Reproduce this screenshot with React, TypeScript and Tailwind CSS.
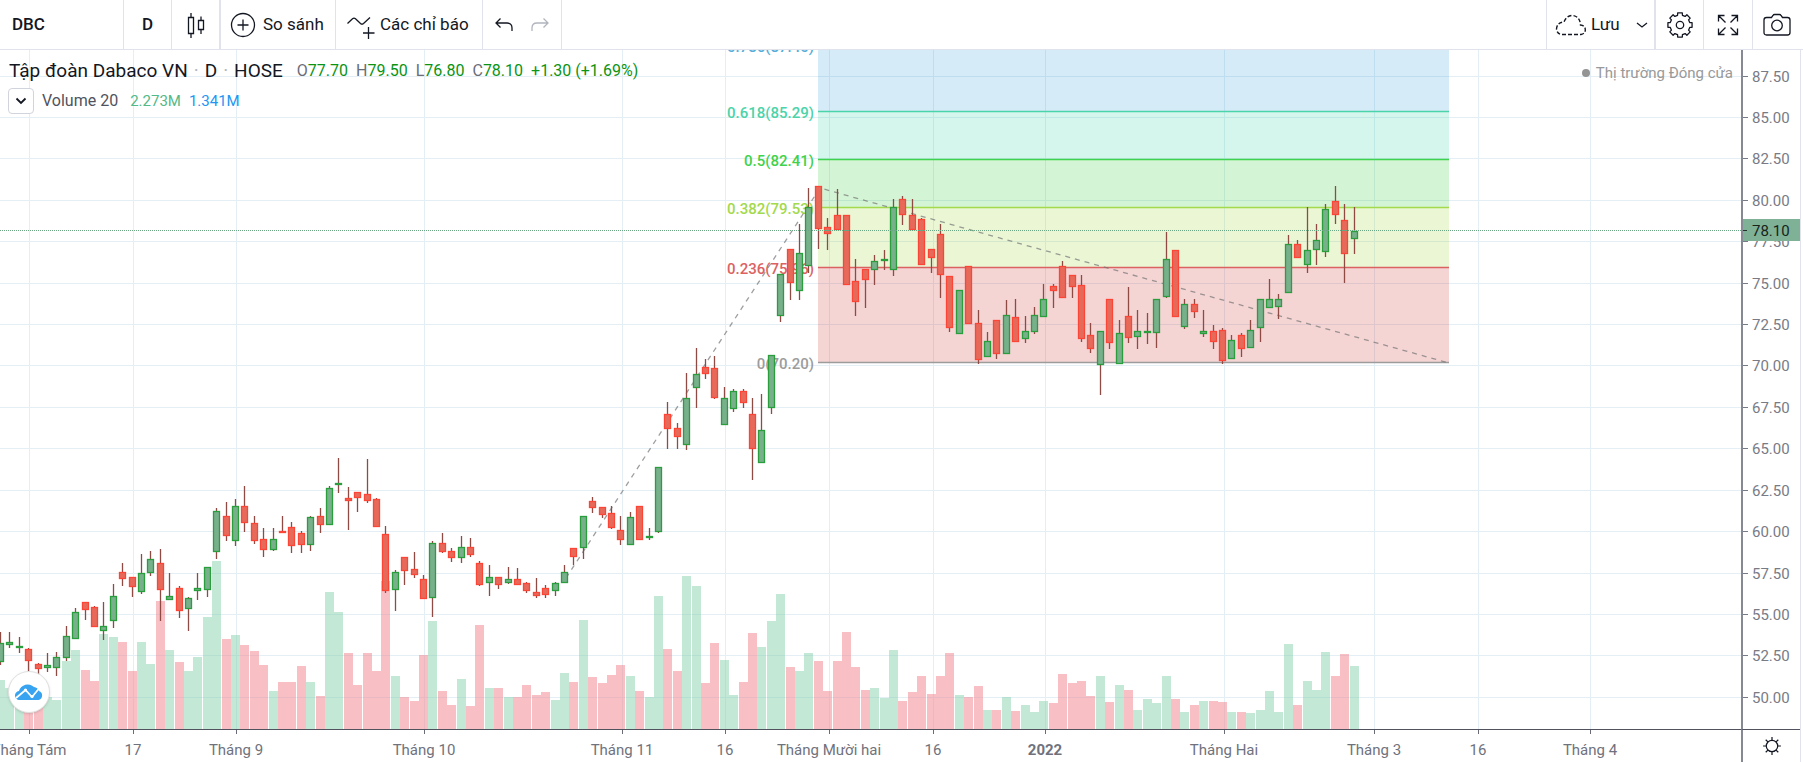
import { useState } from "react"

/* [direction, high, body top, body bottom, low, volume top], y positions on the chart canvas */
type Bar = ["u" | "d", number, number, number, number, number]

const bars: Bar[] = [
  ["u", 632, 643, 662, 665, 680], ["u", 632, 642, 645, 648, 688], ["u", 637, 646, 648, 653, 693],
  ["d", 648, 649, 661, 672, 700], ["d", 663, 664, 669, 675, 700], ["u", 653, 665, 668, 672, 697],
  ["u", 652, 657, 668, 676, 700], ["u", 626, 636, 658, 661, 661], ["u", 608, 612, 639, 639, 650],
  ["d", 602, 602, 610, 620, 670], ["d", 606, 607, 627, 627, 681], ["u", 602, 626, 631, 640, 634],
  ["u", 584, 596, 621, 628, 637], ["d", 563, 572, 579, 586, 642], ["d", 577, 577, 587, 597, 671],
  ["u", 554, 573, 592, 594, 642], ["u", 551, 559, 573, 576, 664], ["d", 549, 563, 590, 621, 601],
  ["u", 573, 596, 600, 600, 650], ["d", 586, 588, 611, 618, 662], ["u", 597, 598, 609, 631, 671],
  ["u", 573, 588, 591, 600, 657], ["u", 567, 567, 590, 597, 617], ["u", 508, 511, 552, 559, 561],
  ["d", 502, 516, 536, 541, 639], ["u", 499, 506, 541, 546, 635], ["d", 486, 506, 523, 532, 645],
  ["d", 516, 523, 541, 544, 651], ["d", 528, 539, 550, 557, 665], ["u", 528, 539, 550, 551, 691],
  ["d", 516, 531, 533, 533, 682], ["d", 522, 527, 546, 553, 682], ["d", 531, 533, 545, 553, 666],
  ["u", 516, 517, 545, 551, 682], ["d", 508, 516, 525, 533, 696], ["u", 486, 488, 525, 525, 592],
  ["u", 458, 483, 485, 493, 612], ["d", 487, 498, 501, 530, 653], ["d", 492, 492, 498, 512, 685],
  ["d", 459, 494, 501, 503, 653], ["d", 498, 499, 527, 527, 671], ["d", 526, 534, 591, 593, 581],
  ["u", 570, 572, 590, 611, 676], ["d", 557, 557, 571, 585, 697], ["d", 552, 569, 575, 578, 701],
  ["d", 575, 579, 599, 599, 655], ["u", 541, 543, 598, 617, 621], ["d", 533, 543, 552, 553, 691],
  ["d", 548, 551, 558, 562, 705], ["u", 536, 547, 558, 563, 679], ["d", 538, 547, 555, 557, 706],
  ["d", 561, 563, 585, 586, 625], ["u", 565, 577, 583, 596, 688], ["d", 577, 577, 585, 589, 688],
  ["u", 567, 579, 583, 584, 697], ["d", 568, 579, 585, 585, 697], ["d", 582, 583, 591, 593, 685],
  ["d", 578, 592, 596, 598, 695], ["d", 585, 588, 595, 598, 692], ["u", 582, 583, 591, 596, 700],
  ["u", 565, 572, 583, 583, 673], ["d", 548, 548, 557, 565, 682], ["u", 516, 516, 548, 559, 620],
  ["d", 497, 501, 508, 513, 677], ["d", 507, 507, 515, 518, 683], ["d", 506, 513, 528, 529, 675],
  ["d", 516, 530, 540, 545, 665], ["u", 512, 517, 545, 545, 676], ["d", 506, 506, 540, 540, 691],
  ["u", 528, 536, 538, 540, 697], ["u", 467, 467, 532, 533, 596], ["d", 402, 414, 429, 449, 649],
  ["d", 423, 428, 437, 449, 671], ["u", 373, 398, 445, 450, 576], ["u", 348, 374, 388, 408, 586],
  ["d", 359, 367, 374, 379, 683], ["d", 356, 368, 398, 399, 643], ["u", 387, 398, 425, 425, 660],
  ["u", 389, 391, 409, 412, 695], ["d", 389, 391, 403, 408, 682], ["d", 398, 414, 449, 480, 633],
  ["u", 394, 430, 463, 463, 647], ["u", 355, 355, 408, 414, 621], ["u", 274, 274, 316, 322, 594],
  ["d", 249, 249, 283, 300, 667], ["u", 224, 253, 291, 300, 671], ["u", 188, 207, 266, 273, 653],
  ["d", 186, 186, 229, 249, 661], ["d", 218, 227, 234, 250, 691], ["d", 189, 215, 230, 230, 661],
  ["d", 215, 215, 285, 285, 632], ["d", 259, 281, 302, 316, 667], ["d", 269, 269, 280, 308, 690],
  ["u", 255, 261, 270, 285, 688], ["u", 250, 259, 261, 270, 698], ["u", 199, 207, 270, 276, 650],
  ["d", 196, 199, 215, 225, 701], ["d", 199, 215, 230, 230, 692], ["d", 218, 219, 265, 265, 676],
  ["d", 249, 249, 258, 273, 694], ["d", 224, 234, 275, 298, 676], ["d", 276, 276, 328, 332, 653],
  ["u", 290, 290, 334, 334, 695], ["d", 266, 266, 324, 324, 697], ["d", 310, 323, 360, 364, 686],
  ["u", 332, 341, 357, 357, 710], ["d", 320, 320, 354, 359, 710], ["u", 300, 315, 354, 354, 697],
  ["d", 299, 317, 342, 342, 711], ["u", 316, 331, 339, 343, 705], ["u", 307, 315, 332, 334, 712],
  ["u", 284, 299, 317, 317, 701], ["d", 284, 286, 291, 308, 703], ["d", 261, 266, 298, 298, 674],
  ["d", 275, 275, 287, 298, 683], ["d", 275, 285, 339, 342, 681], ["d", 323, 335, 349, 353, 696],
  ["u", 331, 331, 365, 395, 676], ["d", 299, 299, 343, 349, 702], ["u", 320, 333, 364, 364, 685],
  ["d", 287, 316, 338, 343, 690], ["u", 310, 331, 337, 349, 710], ["u", 313, 331, 333, 344, 699],
  ["u", 299, 299, 333, 348, 703], ["u", 232, 259, 297, 298, 676], ["d", 250, 250, 317, 317, 699],
  ["u", 299, 304, 327, 329, 712], ["d", 299, 304, 312, 318, 705], ["u", 310, 331, 334, 337, 701],
  ["d", 325, 331, 342, 349, 701], ["d", 328, 330, 361, 364, 702], ["u", 335, 340, 359, 359, 712],
  ["d", 333, 335, 349, 357, 712], ["u", 320, 330, 348, 348, 713], ["u", 299, 299, 328, 342, 710],
  ["u", 279, 299, 308, 308, 691], ["u", 294, 299, 307, 319, 712], ["u", 235, 244, 293, 293, 644],
  ["d", 240, 244, 258, 258, 705], ["u", 207, 250, 265, 273, 681], ["u", 224, 240, 250, 265, 690],
  ["u", 204, 209, 252, 257, 652], ["d", 186, 201, 215, 224, 676], ["d", 204, 220, 254, 283, 654],
  ["u", 207, 231, 239, 254, 666],
]

const prices = Array.from({ length: 16 }, (_, i) => 87.5 - i * 2.5)

const dates = [
  { x: 29, label: "Tháng Tám" },
  { x: 133, label: "17" },
  { x: 236, label: "Tháng 9" },
  { x: 424, label: "Tháng 10" },
  { x: 622, label: "Tháng 11" },
  { x: 725, label: "16" },
  { x: 829, label: "Tháng Mười hai" },
  { x: 933, label: "16" },
  { x: 1045, label: "2022", bold: true },
  { x: 1224, label: "Tháng Hai" },
  { x: 1374, label: "Tháng 3" },
  { x: 1478, label: "16" },
  { x: 1590, label: "Tháng 4" },
]

const fibs = [
  { y: 45, label: "0.786(87.40)", color: "#55add9", fill: "#2f9bd6" },
  { y: 111, label: "0.618(85.29)", color: "#4bd3a9", fill: "#2ad0a0" },
  { y: 159, label: "0.5(82.41)", color: "#3fd24c", fill: "#2ace2f" },
  { y: 207, label: "0.382(79.53)", color: "#a3d94c", fill: "#98d02a" },
  { y: 267, label: "0.236(75.96)", color: "#dc6262", fill: "#cc2a2a" },
  { y: 362, label: "0(70.20)", color: "#9c9c9c", fill: "none" },
]

const TOP = 50
const BASE = 730
const priceY = (price: number) => Math.round(75.5 + (87.5 - price) * 16.57)
const barX = (i: number) => Math.round(9.4 * i + 1)

const gearPath = (r: number, inner: number) => {
  const points: string[] = []
  for (let i = 0; i < 8; i++) {
    for (const [offset, radius] of [[-14, inner], [-11, r], [11, r], [14, inner]]) {
      const a = ((i * 45 + offset) * Math.PI) / 180
      points.push(`${(14 + radius * Math.sin(a)).toFixed(2)} ${(14 - radius * Math.cos(a)).toFixed(2)}`)
    }
  }
  return `M${points.join("L")}Z`
}

const Icon = ({ children, className = "size-7" }: { children: React.ReactNode; className?: string }) => (
  <svg className={className} viewBox="0 0 28 28" fill="none" stroke="currentColor" strokeWidth="1.3" aria-hidden="true">
    {children}
  </svg>
)

function Toolbar() {
  return (
    <header className="flex h-[50px] shrink-0 border-b border-[#e0e3eb] pr-0.5 text-[17px] text-[#131722]">
      <button className="w-[124px] border-r border-[#e0e3eb] pl-3 text-left font-medium">DBC</button>
      <button className="w-12 border-r border-[#e0e3eb] font-medium">D</button>
      <button className="flex w-[49px] items-center justify-center border-r-2 border-[#e0e3eb]" aria-label="Nến">
        <Icon>
          <path d="M6.5 6.5h5v16h-5zM9 2v4.500M9 22.500V27M16.500 9.500h5v9h-5zM19 5.500v4M19 18.500v4.500" />
        </Icon>
      </button>
      <button className="flex w-[115px] items-center gap-1.5 border-r border-[#e0e3eb] pl-2">
        <Icon>
          <circle cx="14" cy="14" r="11.500" />
          <path d="M14 8.500v11M8.500 14h11" />
        </Icon>
        <span>So sánh</span>
      </button>
      <button className="flex w-[147px] items-center gap-1 border-r border-[#e0e3eb] pl-2.5">
        <svg className="h-7 w-[30px]" viewBox="0 0 30 28" fill="none" stroke="currentColor" strokeWidth="1.300" aria-hidden="true">
          <path d="M1.500 12.500L6.500 7.800q1.500-1.300 3 0l5 4.700q1.500 1.300 3 0L24 6.500M22.500 16v12M17 22.000h11.500" />
        </svg>
        <span>Các chỉ báo</span>
      </button>
      <div className="flex w-[79px] items-center justify-center gap-2 border-r border-[#e0e3eb]">
        <button aria-label="Hoàn tác">
          <Icon>
            <path d="M10.500 7.500L6 12l4.500 4.500M6.500 12H17q5 0 5 5v3" />
          </Icon>
        </button>
        <button className="text-[#b2b5be]" aria-label="Làm lại" disabled>
          <Icon>
            <path d="M17.500 7.500L22 12l-4.500 4.500M21.500 12H11q-5 0-5 5v3" />
          </Icon>
        </button>
      </div>
      <div className="ml-auto flex">
        <button className="flex w-[110px] items-center border-r-2 border-l border-[#e0e3eb] pl-2">
          <svg className="h-6 w-8" viewBox="0 0 32 24" fill="none" stroke="currentColor" strokeWidth="1.400" strokeDasharray="4 2" aria-hidden="true">
            <path d="M7 21.500h19q4.500-1 4.300-5-.3-4-4.800-4.500Q25 3 17 2.500 11 3 9 9 2 9.500 1.500 16 2 21 7 21.500z" />
          </svg>
          <span className="pl-1">Lưu</span>
          <svg className="ml-4 h-2 w-3" viewBox="0 0 12 8" fill="none" stroke="currentColor" strokeWidth="1.300" aria-hidden="true">
            <path d="M1 2l5 4 5-4" />
          </svg>
        </button>
        <button className="flex w-12 items-center justify-center border-r border-[#e0e3eb]" aria-label="Cài đặt">
          <Icon>
            <path d={gearPath(12.3, 10)} strokeLinejoin="round" />
            <circle cx="14" cy="14" r="3.700" />
          </Icon>
        </button>
        <button className="flex w-[49px] items-center justify-center border-r border-[#e0e3eb]" aria-label="Toàn màn hình">
          <Icon>
            <path d="M4.500 10.500v-6h6M4.500 4.500l7 7M17.500 4.500h6v6M23.500 4.500l-7 7M4.500 17.500v6h6M4.500 23.500l7-7M17.500 23.500h6v-6M23.500 23.500l-7-7" />
          </Icon>
        </button>
        <button className="flex w-12 items-center justify-center" aria-label="Chụp ảnh">
          <Icon>
            <path d="M3.500 6.500h5l1.500-2q.5-1 1.500-1h5q1 0 1.500 1l1.500 2h5q2.500 0 2.500 2.500v12.500q0 2.500-2.500 2.500h-21q-2.500 0-2.500-2.500V9q0-2.500 2.500-2.500z" />
            <circle cx="14" cy="14.500" r="5.300" />
          </Icon>
        </button>
      </div>
    </header>
  )
}

function Plot() {
  return (
    <svg className="block h-full w-full text-[15px]" aria-label="DBC">
      <g transform={`translate(0 ${-TOP})`}>
        <g stroke="#e3eef5">
          {prices.map((p) => <line key={p} x1="0" x2="100%" y1={priceY(p) + 0.5} y2={priceY(p) + 0.5} />)}
          {dates.map((d) => <line key={d.x} x1={d.x + 0.5} x2={d.x + 0.5} y1={TOP} y2={BASE} />)}
        </g>

        {bars.map(([dir, , , , , vol], i) => (
          <rect key={i} x={barX(i) - 5} y={vol} width="9" height={BASE - vol} fill={dir === "u" ? "#87d1ad" : "#f1818b"} fillOpacity="0.5" />
        ))}

        {fibs.slice(0, -1).map((f, i) => (
          <rect key={f.y} x="818" y={f.y} width="631" height={fibs[i + 1].y - f.y} fill={f.fill} fillOpacity="0.2" />
        ))}
        {fibs.map((f) => (
          <g key={f.y}>
            <line x1="818" x2="1449" y1={f.y + 0.5} y2={f.y + 0.5} stroke={f.color} strokeWidth="1.500" />
            <text x="814" y={f.y + 7} textAnchor="end" fill={f.color} fontWeight="500">{f.label}</text>
          </g>
        ))}
        <path d="M566 578L820 188L1449 363" fill="none" stroke="#757575" strokeOpacity="0.700" strokeWidth="1.300" strokeDasharray="5 5" />

        {bars.map(([dir, high, top, bottom, low], i) => (
          <g key={i}>
            <line x1={barX(i) - 0.5} x2={barX(i) - 0.5} y1={high} y2={low} stroke="#8f4a43" strokeWidth="1.300" />
            <rect
              x={barX(i) - 3.5}
              y={top + 0.5}
              width="6"
              height={Math.max(bottom - top - 1, 1)}
              fill={dir === "u" ? "#78b08c" : "#e56a5a"}
              stroke={dir === "u" ? "#2a9d3c" : "#fb4537"}
              strokeWidth="1.300"
            />
          </g>
        ))}
        <line x1="0" x2="100%" y1="230.500" y2="230.500" stroke="#6ba583" strokeDasharray="1 1" />
      </g>
    </svg>
  )
}

function PriceAxis() {
  return (
    <svg className="block h-full w-full text-[15px]" fill="#787b86">
      <g transform={`translate(0 ${-TOP})`}>
        {prices.map((p) => (
          <g key={p}>
            <line x1="0" x2="5" y1={priceY(p) + 0.5} y2={priceY(p) + 0.5} stroke="#787b86" />
            <text x="9" y={priceY(p) + 6}>{p.toFixed(2)}</text>
          </g>
        ))}
        <rect x="-2" y="219" width="60" height="22" fill="#7fb197" />
        <line x1="0" x2="4" y1="230.500" y2="230.500" stroke="#1f3328" />
        <text x="9" y="236" fill="#16241c">78.10</text>
      </g>
    </svg>
  )
}

function TimeAxis() {
  return (
    <svg className="block h-full w-full text-[15px]" fill="#6f727d">
      {dates.map((d) => (
        <g key={d.x}>
          <line x1={d.x + 0.5} x2={d.x + 0.5} y1="0" y2="4" stroke="#6a6d78" />
          <text x={d.x} y="25" textAnchor="middle" fontWeight={d.bold ? 700 : 400}>{d.label}</text>
        </g>
      ))}
    </svg>
  )
}

const ohlc = [["O", "77.70"], ["H", "79.50"], ["L", "76.80"], ["C", "78.10"]]

function Legend() {
  const [open, setOpen] = useState(true)

  return (
    <div className="absolute top-2 left-2 text-base leading-[26px]">
      <div className="flex items-center gap-2 text-[#0b9414]">
        <h1 className="flex gap-1.5 pr-1.5 pl-px text-[19px] leading-[26px] text-[#131722]">
          Tập đoàn Dabaco VN
          <span className="text-[#b2b5be]">·</span>D<span className="text-[#b2b5be]">·</span>HOSE
        </h1>
        {ohlc.map(([name, value]) => (
          <span key={name}>
            <span className="text-[#6a6d78]">{name}</span>
            {value}
          </span>
        ))}
        <span>+1.30 (+1.69%)</span>
      </div>
      <div className="mt-1 flex items-center gap-2">
        <button
          className="flex size-[26px] items-center justify-center rounded-sm border border-[#d1d4dc] bg-white text-[#131722]"
          aria-label="Chỉ báo"
          aria-expanded={open}
          onClick={() => setOpen(!open)}
        >
          <svg className="h-2 w-3" viewBox="0 0 12 8" fill="none" stroke="currentColor" strokeWidth="1.800" aria-hidden="true">
            <path d="M1.500 1.500L6 6l4.500-4.500" />
          </svg>
        </button>
        {open && (
          <>
            <span className="pr-1 text-[#50535e]">Volume 20</span>
            <span className="text-[15px] text-[#53b987]">2.273M</span>
            <span className="text-[15px] text-[#2196f3]">1.341M</span>
          </>
        )}
      </div>
    </div>
  )
}

function App(): React.ReactElement {
  return (
    <main className="flex h-screen flex-col overflow-hidden bg-white font-[Roboto,sans-serif]">
      <Toolbar />
      <div className="mr-0.5 grid min-h-0 flex-1 grid-cols-[minmax(0,1fr)_59px] grid-rows-[minmax(0,1fr)_33px] border-r border-[#e0e3eb]">
        <section className="relative min-w-0 overflow-hidden">
          <Plot />
          <Legend />
          <p className="absolute top-2 right-2 flex items-center gap-1.5 text-[15px] leading-[30px] text-[#999999]">
            <span className="size-2 rounded-full bg-[#949494]" />
            Thị trường Đóng cửa
          </p>
          <a href="#" className="absolute bottom-4 left-2 flex size-[42px] items-center justify-center rounded-full border border-[#e0e0e0] bg-white shadow-sm" aria-label="TradingView">
            <svg className="h-4 w-7" viewBox="0 0 28 16" aria-hidden="true">
              <path d="M5 16a4.500 4.500 0 0 1-1-9 9 9 0 0 1 15-4 6 6 0 0 1 5 4 4.700 4.700 0 0 1-.5 9z" fill="#38a3f0" />
              <path d="M1 14L10.500 6l6.500 7L24 4.500" fill="none" stroke="#fff" strokeWidth="1.800" />
              <circle cx="10.500" cy="6" r="1.600" fill="#fff" />
              <circle cx="17" cy="12.500" r="1.600" fill="#fff" />
            </svg>
          </a>
        </section>
        <div className="overflow-hidden border-l-2 border-[#868993]">
          <PriceAxis />
        </div>
        <div className="overflow-hidden border-t border-[#50535e]">
          <TimeAxis />
        </div>
        <div className="flex items-center justify-center border-t border-l-2 border-t-[#50535e] border-l-[#868993]">
          <button className="text-[#131722]" aria-label="Cài đặt thang đo">
            <Icon className="block size-5">
              <circle cx="14" cy="14" r="8" strokeWidth="1.700" />
              <path d="M14 1.500V6M14 22v4.500M1.500 14H6M22 14h4.500M5.200 5.200l3.100 3.100M19.700 19.700l3.100 3.100M22.800 5.200l-3.100 3.100M8.300 19.700l-3.100 3.100" strokeWidth="1.700" />
            </Icon>
          </button>
        </div>
      </div>
    </main>
  )
}

export default App
